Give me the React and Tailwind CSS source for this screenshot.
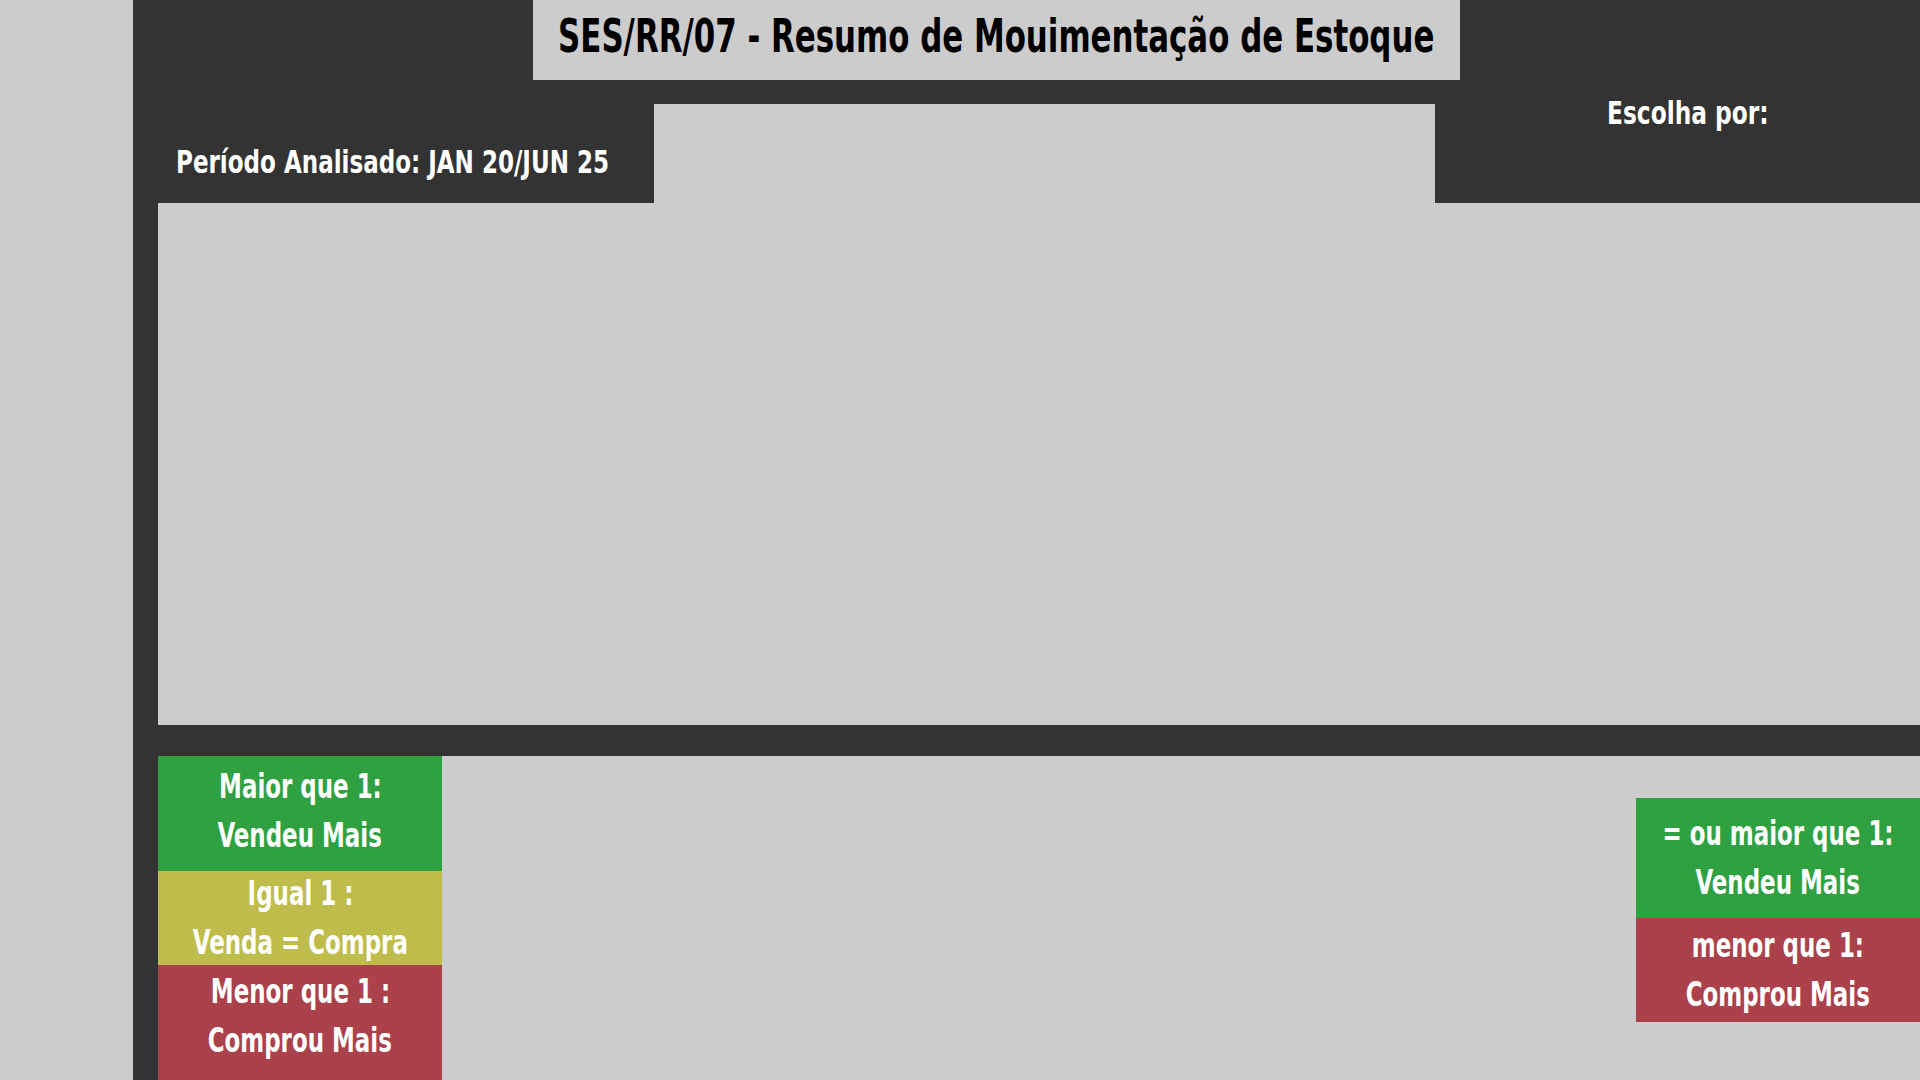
// App.jsx - Resumo de Movimentação de Estoque (dashboard shell)

const font = "font-['DejaVu_Sans_Condensed','DejaVu_Sans',sans-serif] font-bold";

function Narrow({ children, className = "" }) {
  return <span className={`inline-block whitespace-nowrap ${className}`}>{children}</span>;
}

function LegendBox({ color, height, lines, pt = "" }) {
  return (
    <div className={`${color} ${height} flex flex-col items-center justify-center text-white text-[34px] leading-[49px] ${pt}`}>
      {lines.map((l) => (
        <Narrow key={l} className="scale-x-[0.75] origin-center">{l}</Narrow>
      ))}
    </div>
  );
}

export default function App() {
  return (
    <div className={`w-[1920px] h-[1080px] bg-[#cccccc] flex overflow-hidden ${font}`}>
      {/* left margin */}
      <div className="w-[133px] shrink-0" />

      <div className="flex-1 bg-[#333333] flex flex-col">
        {/* header */}
        <div className="h-[80px] flex shrink-0">
          <div className="w-[400px]" />
          <div className="w-[927px] bg-[#cccccc] flex items-center justify-center pb-[8px] text-black text-[47px] leading-[54px]">
            <Narrow className="scale-x-[0.73] origin-center">SES/RR/07 - Resumo de Mouimentação de Estoque</Narrow>
          </div>
        </div>
        <div className="h-[123px] flex shrink-0">
          <div className="w-[521px] pl-[43px] pt-[63px] text-white text-[32px] leading-[38px]">
            <Narrow className="scale-x-[0.8] origin-left">Período Analisado: JAN 20/JUN 25</Narrow>
          </div>
          <div className="w-[781px] pt-[24px]">
            <div className="h-[99px] bg-[#cccccc]" />
          </div>
          <div className="flex-1 pl-[172px] pt-[14px] text-white text-[32px] leading-[38px]">
            <Narrow className="scale-x-[0.81] origin-left">Escolha por:</Narrow>
          </div>
        </div>

        {/* main area */}
        <div className="ml-[25px] h-[522px] bg-[#cccccc] shrink-0" />
        <div className="h-[31px] shrink-0" />

        {/* bottom area with legends */}
        <div className="ml-[25px] flex-1 bg-[#cccccc] flex justify-between">
          <div className="w-[284px] flex flex-col">
            <LegendBox color="bg-[#2fa141]" height="h-[115px]" lines={["Maior que 1:", "Vendeu Mais"]} pt="pb-[6px]" />
            <LegendBox color="bg-[#bebc4a]" height="h-[94px]" lines={["Igual 1 :", "Venda = Compra"]} />
            <LegendBox color="bg-[#ab414a]" height="flex-1" lines={["Menor que 1 :", "Comprou Mais"]} pb="" pt="pb-[14px]" />
          </div>
          <div className="w-[284px] mt-[42px] flex flex-col self-start">
            <LegendBox color="bg-[#2fa141]" height="h-[120px]" lines={["= ou maior que 1:", "Vendeu Mais"]} />
            <LegendBox color="bg-[#ab414a]" height="h-[104px]" lines={["menor que 1:", "Comprou Mais"]} />
          </div>
        </div>
      </div>
    </div>
  );
}
